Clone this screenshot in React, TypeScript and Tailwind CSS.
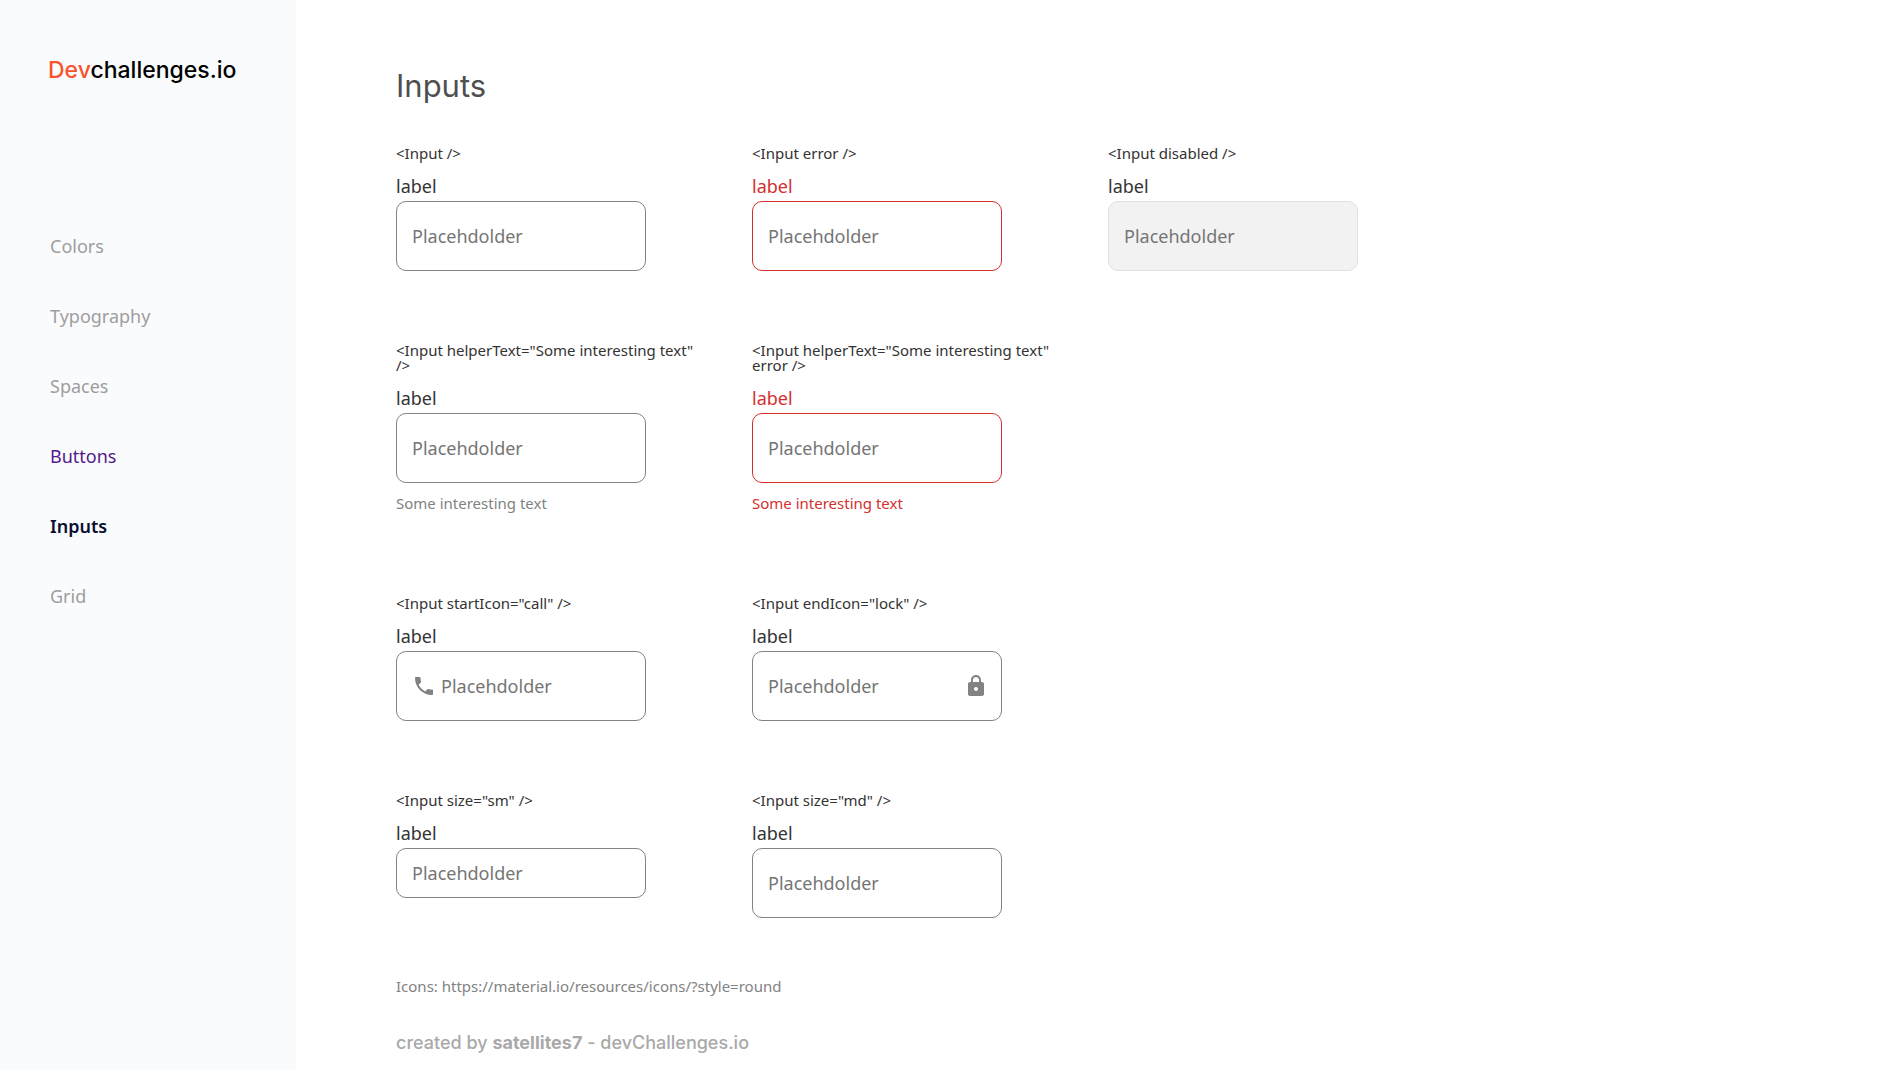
import { useId, type ReactNode } from "react";
import { MdLock, MdPhone } from "react-icons/md";

type FieldProps = {
  code: string;
  error?: boolean;
  disabled?: boolean;
  helperText?: string;
  startIcon?: ReactNode;
  endIcon?: ReactNode;
  size?: "sm" | "md";
};

function Field({ code, error, disabled, helperText, startIcon, endIcon, size = "md" }: FieldProps) {
  const id = useId();
  const height = size === "sm" ? "h-[50px]" : "h-[70px]";
  const tone = disabled
    ? "border-[#e0e0e0] bg-[#f2f2f2]"
    : error
      ? "border-[#d32f2f]"
      : "border-[#828282]";
  return (
    <div className="flex flex-col items-start">
      <code className="mb-2.5 font-[Noto_Sans,sans-serif] text-[15px] leading-[15px] text-[#333333]">{code}</code>
      <label htmlFor={id} className={`text-lg leading-[30px] ${error ? "text-[#d32f2f]" : "text-[#333333]"}`}>
        label
      </label>
      <div className={`flex w-[250px] items-center gap-[5px] rounded-[10px] border pr-[13px] pl-[15px] text-[#828282] ${height} ${tone}`}>
        {startIcon}
        <input
          id={id}
          type="text"
          placeholder="Placehdolder"
          disabled={disabled}
          className="min-w-0 flex-1 bg-transparent text-lg text-[#333333] outline-none placeholder:text-[#757575]"
        />
        {endIcon}
      </div>
      {helperText && (
        <p className={`mt-2.5 text-[15px] leading-5 ${error ? "text-[#d32f2f]" : "text-[#828282]"}`}>{helperText}</p>
      )}
    </div>
  );
}

const navItems = [
  { name: "Colors", tone: "text-[#9e9e9e]" },
  { name: "Typography", tone: "text-[#9e9e9e]" },
  { name: "Spaces", tone: "text-[#9e9e9e]" },
  { name: "Buttons", tone: "text-[#551a8b]" },
  { name: "Inputs", tone: "font-semibold text-[#090f31]" },
  { name: "Grid", tone: "text-[#9e9e9e]" },
];

const row = "grid grid-cols-[repeat(3,minmax(0,306px))] gap-x-[50px]";

export default function App() {
  return (
    <div className="flex min-h-screen bg-white font-[Noto_Sans,sans-serif]">
      <aside className="w-[296px] shrink-0 bg-[#fafbfd] pl-12">
        <a href="#home" className="mt-[52px] block font-[Inter,sans-serif] text-[23px] leading-9 font-medium text-black">
          <span className="text-[#f7542e]">Dev</span>challenges.io
        </a>
        <nav className="mt-[143px] flex flex-col gap-10 pl-0.5">
          {navItems.map((item) => (
            <a key={item.name} href={`#${item.name.toLowerCase()}`} className={`text-lg leading-[30px] ${item.tone}`}>
              {item.name}
            </a>
          ))}
        </nav>
      </aside>
      <main className="min-w-0 flex-1 pt-[63px] pl-[100px]">
        <h1 className="font-[Inter,sans-serif] text-[31px] leading-[46px] text-[#4f4f4f]">Inputs</h1>
        <div className="mt-[37px] flex flex-col gap-[72px]">
          <div className={row}>
            <Field code="<Input />" />
            <Field code="<Input error />" error />
            <Field code="<Input disabled />" disabled />
          </div>
          <div className={`${row} pb-[11px]`}>
            <Field code={'<Input helperText="Some interesting text" />'} helperText="Some interesting text" />
            <Field code={'<Input helperText="Some interesting text" error />'} helperText="Some interesting text" error />
          </div>
          <div className={row}>
            <Field code={'<Input startIcon="call" />'} startIcon={<MdPhone className="size-6 shrink-0" />} />
            <Field code={'<Input endIcon="lock" />'} endIcon={<MdLock className="size-6 shrink-0" />} />
          </div>
          <div className={row}>
            <Field code={'<Input size="sm" />'} size="sm" />
            <Field code={'<Input size="md" />'} size="md" />
          </div>
        </div>
        <p className="mt-[58px] text-[15px] leading-5 text-[#828282]">
          Icons: https://material.io/resources/icons/?style=round
        </p>
        <footer className="mt-[33px] font-[Inter,sans-serif] text-lg leading-[27px] font-medium text-[#a9a9a9]">
          created by <b className="font-bold">satellites7</b> - devChallenges.io
        </footer>
      </main>
    </div>
  );
}
